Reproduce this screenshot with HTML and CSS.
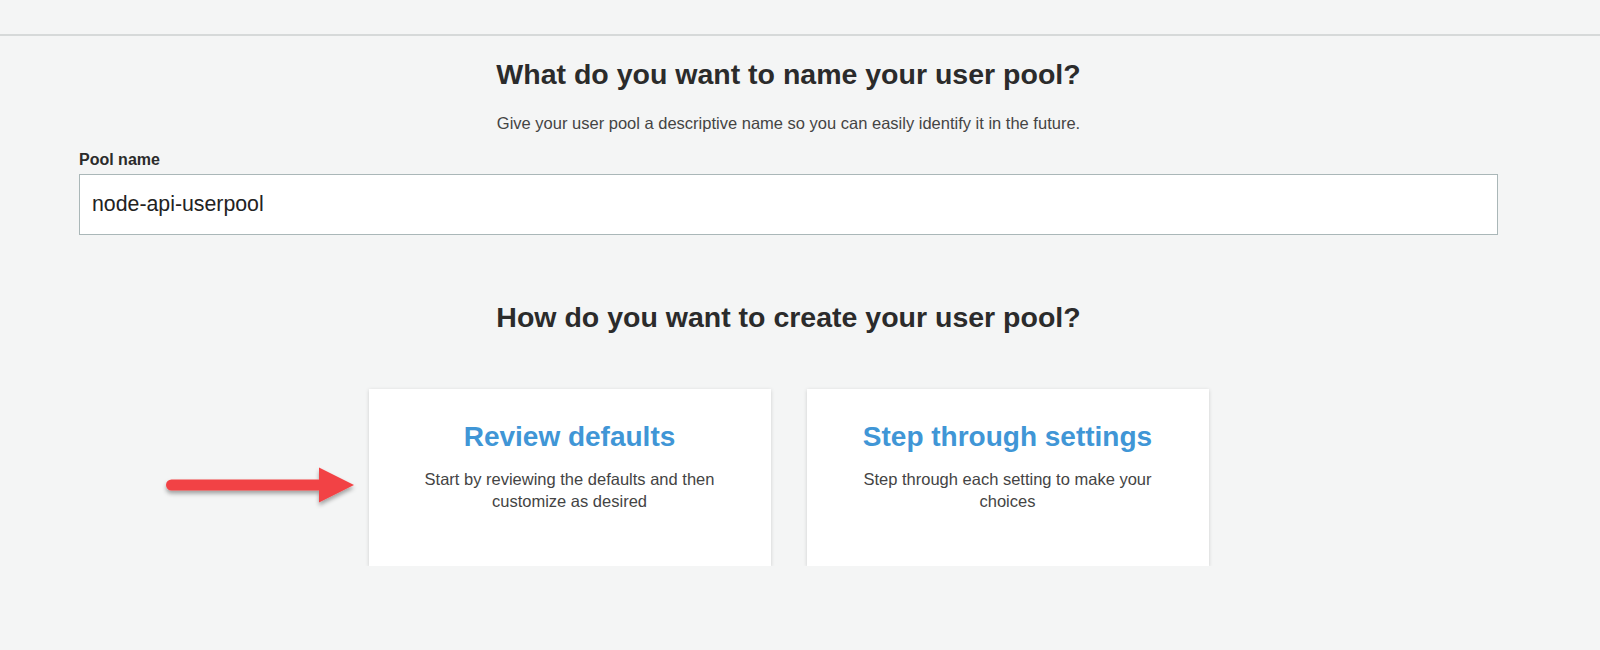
FILE: index.html
```html
<!DOCTYPE html>
<html>
<head>
<meta charset="utf-8">
<link rel="stylesheet" href="styles.css">
</head>
<body>
<div class="topbar"></div>
<main class="content">
  <h1 class="title">What do you want to name your user pool?</h1>
  <p class="subtitle">Give your user pool a descriptive name so you can easily identify it in the future.</p>
  <label class="field-label" for="pool">Pool name</label>
  <div class="input" id="pool">node-api-userpool</div>
  <h2 class="title second">How do you want to create your user pool?</h2>
  <div class="cards">
    <div class="card">
      <svg class="arrow" width="200" height="48" viewBox="0 0 200 48">
        <defs>
          <filter id="sh" x="-10%" y="-30%" width="120%" height="180%">
            <feDropShadow dx="0" dy="3" stdDeviation="2" flood-color="#000" flood-opacity="0.35"/>
          </filter>
        </defs>
        <g filter="url(#sh)">
          <rect x="4" y="16.5" width="158" height="11" rx="5.5" fill="#f24344"/>
          <polygon points="157,4.5 192,22 157,39.5" fill="#f24344"/>
        </g>
      </svg>
      <div class="card-title">Review defaults</div>
      <div class="card-desc">Start by reviewing the defaults and then<br>customize as desired</div>
    </div>
    <div class="card">
      <div class="card-title">Step through settings</div>
      <div class="card-desc">Step through each setting to make your<br>choices</div>
    </div>
  </div>
</main>
</body>
</html>
```
FILE: styles.css
```css
html, body {
  margin: 0;
  padding: 0;
  background: #f4f5f5;
  font-family: "Liberation Sans", Arial, sans-serif;
  color: #333;
}
.topbar {
  height: 34px;
  border-bottom: 2px solid #d6d9d9;
}
.content {
  margin: 0 102px 0 79px;
  display: flex;
  flex-direction: column;
  align-items: center;
}
.title {
  margin: 21px 0 0;
  font-size: 28.5px;
  font-weight: bold;
  line-height: 34px;
  color: #2b2b2b;
}
.second {
  margin-top: 65px;
}
.subtitle {
  margin: 22px 0 0;
  font-size: 16.5px;
  line-height: 20px;
  color: #444;
}
.field-label {
  align-self: stretch;
  margin-top: 18px;
  font-size: 16px;
  font-weight: bold;
  line-height: 18px;
  color: #2b2b2b;
}
.input {
  align-self: stretch;
  box-sizing: border-box;
  height: 61px;
  margin-top: 5px;
  background: #fff;
  border: 1px solid #aab7b8;
  padding: 0 12px;
  display: flex;
  align-items: center;
  font-size: 21.3px;
  color: #222;
}
.cards {
  display: flex;
  gap: 36px;
  margin-top: 55px;
}
.card {
  position: relative;
  width: 402px;
  height: 177px;
  box-sizing: border-box;
  background: #fff;
  box-shadow: 0 1px 4px rgba(0,0,0,0.16);
  text-align: center;
  padding-top: 31px;
}
.card-title {
  font-size: 28px;
  font-weight: bold;
  line-height: 34px;
  color: #4096d6;
}
.card-desc {
  margin-top: 13.5px;
  font-size: 16.5px;
  line-height: 22.5px;
  color: #444;
}
.arrow {
  position: absolute;
  left: -207px;
  top: 74px;
}
```
